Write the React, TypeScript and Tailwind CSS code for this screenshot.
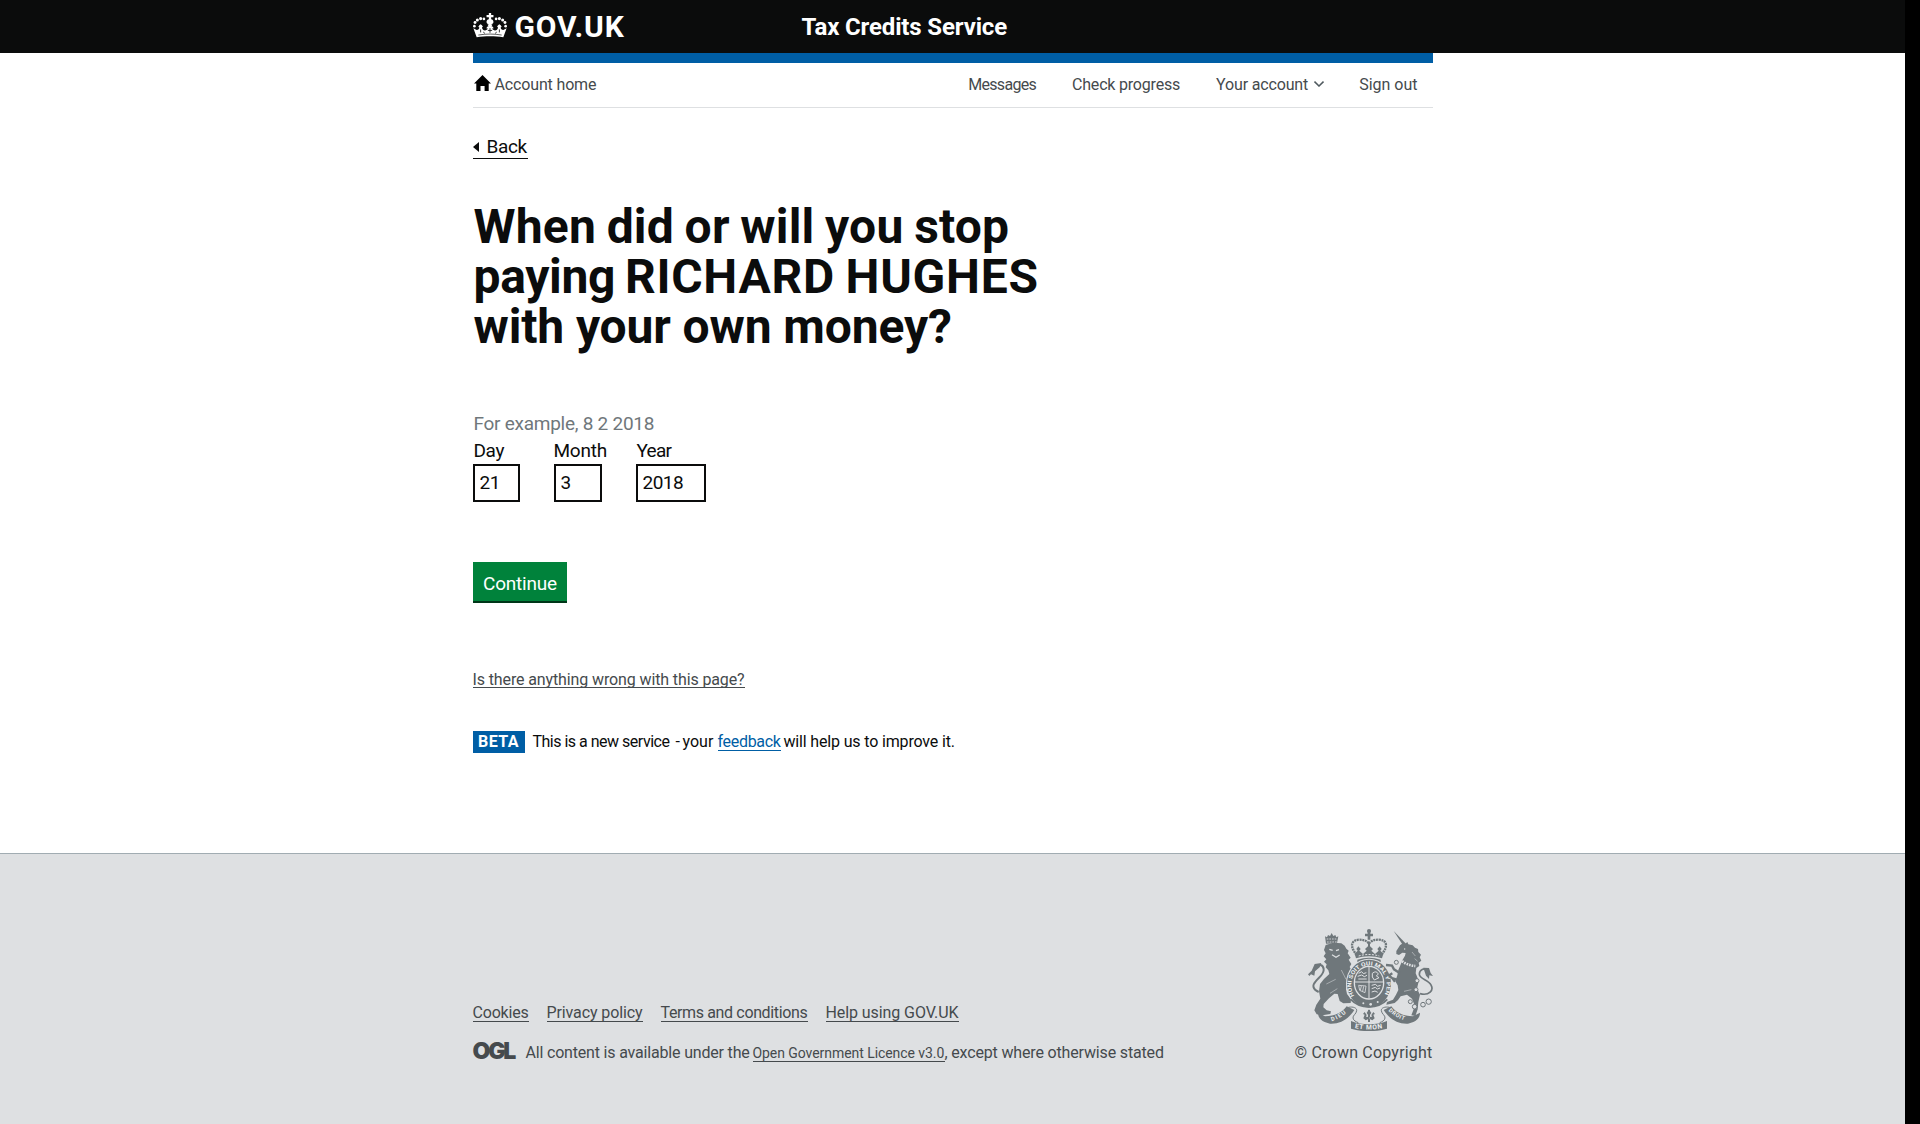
import type { ReactNode } from "react";

function CrownLogo() {
  const pearls: [number, number, number][] = [
    [29, 64, 4], [31, 53, 4.4], [38, 45, 4.6], [48, 41, 4.8], [58, 42, 4],
    [124, 64, 4], [122, 53, 4.4], [115, 45, 4.6], [105, 41, 4.8], [95, 42, 4],
  ];
  return (
    <svg viewBox="25 24 103 76" className="mb-[2px] h-[25px] w-[34px]" fill="#fff" aria-hidden="true">
      {pearls.map(([x, y, r]) => (
        <circle key={`${x}-${y}`} cx={x} cy={y} r={r} />
      ))}
      <path d="M73 24h7v6h7v7h-7v6c5 1 7 4 7 8s-4 7-10.500 7S66 55 66 51s2-7 7-8v-6h-7v-7h7z" />
      <path d="M26 70L36 76C41 75 44 72 44 68L41 66L44 61L48 58L52 61L55 66L52 68C53 74 57 77 61 77S69 74 70 71L65 70L69 65L72 64L69 60L76.500 57L84 60L81 64L84 65L88 70L83 71C84 74 88 77 92 77S100 74 101 68L98 66L101 61L105 58L109 61L112 66L109 68C109 72 112 75 117 76L127 70L117 98C92 94 61 94 36 98Z" />
      <path d="M48 74v9M56 82l5 4M76.500 70v14M70 77h13M105 74v9M97 82l-5 4" stroke="#0b0c0c" strokeWidth="2.500" fill="none" />
      <path d="M41 91c23-4 49-4 71 0" stroke="#0b0c0c" strokeWidth="2" fill="none" />
    </svg>
  );
}

function RoyalArms() {
  return (
    <svg viewBox="84 57 375 306" className="h-[102px] w-[125px]" fill="#6f777b" aria-label="Royal coat of arms">
      <defs>
        <path id="garter" d="M223 258 A53 59 0 1 1 311 258" />
        <path id="dieu" d="M155 334 Q184 325 205 303" />
        <path id="etmon" d="M224 354 Q267 363 311 354" />
        <path id="droit" d="M325 302 Q346 324 382 334" />
      </defs>

      {/* lion */}
      <path d="M116 246c-18-8-20-20-9-32 12-14 26-22 24-37-2-14-15-16-25-6" stroke="#6f777b" strokeWidth="6" fill="none" />
      <path d="M84 193L95 182L104 162L124 159L119 172L105 184L103 197L93 193L88 198Z" />
      <path d="M135 79L141 82L144 75L150 78L155 69L160 78L166 75L169 82L175 79L171 100L138 101Z" />
      <path d="M140 87h31M141 96h30" stroke="#dee0e2" strokeWidth="2.500" strokeDasharray="5 3" />
      <path d="M137 105L160 98L184 100L194 107L199 116L206 122L203 130L212 143L206 149L214 162L209 171L217 185L221 202L216 216L201 214L198 238L201 252L213 268L212 279L190 280L179 273L173 252L163 251L147 265L131 282L130 292L140 301L153 304L151 312L127 316L110 313L103 301L109 284L121 266L117 244L120 222L132 207L148 192L145 181L137 172L140 163L132 155L139 148L131 139L137 130L132 120Z" />
      <path d="M148 118l10 3M168 122l9-3M156 134l12 8 11-7" stroke="#dee0e2" strokeWidth="3.500" fill="none" />
      <path d="M139 222l28-14M150 250l22-14M184 180l14 28" stroke="#dee0e2" strokeWidth="1.500" fill="none" />

      {/* crown */}
      <circle cx="267" cy="63" r="6" />
      <path d="M263 62h8v9h8v8h-8v10h-8V79h-8v-8h8z" />
      <path d="M230 135C208 108 213 90 238 89C250 89 261 92 267 101C273 92 284 89 296 89C321 90 326 108 304 135" stroke="#6f777b" strokeWidth="7" strokeDasharray="6 2" fill="none" />
      <path d="M264 98h6v30h-6z" />
      <path d="M224 131L233 122L229 117L235 109L242 117L238 122L249 132L260 122L255 117L267 106L279 117L274 122L285 132L296 122L292 117L299 109L305 117L301 122L310 131L306 145C282 137 252 137 228 145Z" />
      <path d="M232 149c22-8 48-8 70 0v9c-22-8-48-8-70 0z" />
      <path d="M236 138c20-6 42-6 62 0" stroke="#dee0e2" strokeWidth="3" strokeDasharray="6 4" fill="none" />

      {/* garter and shield */}
      <ellipse cx="267" cy="221" rx="69" ry="75" fill="#dee0e2" />
      <ellipse cx="267" cy="221" rx="66" ry="72" />
      <ellipse cx="267" cy="218" rx="46" ry="51" fill="#dee0e2" />
      <ellipse cx="267" cy="218" rx="42" ry="47" />
      <path d="M267 171v94M225 216h84" stroke="#dee0e2" strokeWidth="3" />
      <path d="M236 190l9-5 5 6 9-3M233 199l12-4 8 5 8-4M235 207h25M277 190q12-10 18 2l-6 6 8 5-14 7-6-9zM275 226l12-3 5 6 10-3M275 236l11-4 6 5 8-3M275 246l10-3 8 4" stroke="#dee0e2" strokeWidth="3" fill="none" />
      <path d="M236 226l22 2-3 20-16-7zM244 228l-3 13M251 229l-3 15" stroke="#dee0e2" strokeWidth="2.500" fill="none" />
      <path d="M212 268C240 298 294 298 322 268" stroke="#6f777b" strokeWidth="5" fill="none" />
      <circle cx="250" cy="280" r="3" fill="#dee0e2" />
      <circle cx="272" cy="283" r="4" fill="#dee0e2" />
      <circle cx="293" cy="276" r="3" fill="#dee0e2" />
      <text fill="#eef0f1" fontFamily="Roboto" fontWeight="700" fontSize="17">
        <textPath href="#garter" textLength="262" lengthAdjust="spacingAndGlyphs">HONI SOIT QUI MAL Y PENSE</textPath>
      </text>

      {/* unicorn */}
      <path d="M341 63L378 101L370 107Z" />
      <path d="M349 123L360 106L368 100L374 103L382 96L385 103L398 106L405 113L414 117L415 126L423 134L419 142L424 152L416 158L418 168L409 174L407 190L412 202L415 218L411 236L420 254L415 276L413 298L406 318L394 316L401 298L402 281L396 266L381 254L362 259L354 270L344 279L319 284L321 276L339 269L348 254L355 240L353 226L346 214L352 196L355 180L361 166L367 151L375 137L377 129L367 128L357 135L349 132Z" />
      <path d="M360 190L342 178L336 167L318 165M356 210L336 204L327 196L337 190M337 205L345 215" stroke="#6f777b" strokeWidth="7" fill="none" />
      <path d="M360 148C372 160 388 167 406 168" stroke="#dee0e2" strokeWidth="8" strokeDasharray="5 3" fill="none" />
      <circle cx="374" cy="117" r="2" fill="#dee0e2" />
      <path d="M396 126l10 12M404 146l9 8M372 244l22-5" stroke="#dee0e2" strokeWidth="1.500" fill="none" />
      <path d="M420 251C448 258 462 240 453 225C446 210 418 207 418 193C418 179 432 172 444 181" stroke="#6f777b" strokeWidth="5" fill="none" />
      <path d="M430 173L447 174L452 189L459 198L448 196L447 207L438 197L434 185Z" />
      <g fill="none" stroke="#6f777b" strokeWidth="3">
        <circle cx="349" cy="157" r="6" />
        <circle cx="411" cy="212" r="6" fill="#dee0e2" />
        <circle cx="408" cy="239" r="6" fill="#dee0e2" />
        <circle cx="391" cy="275" r="6" fill="#dee0e2" />
        <circle cx="404" cy="290" r="7" fill="#dee0e2" />
        <circle cx="429" cy="284" r="7" />
        <circle cx="446" cy="275" r="8" />
      </g>

      {/* motto ribbon */}
      <path d="M114 308L135 319C165 319 186 308 200 289L223 300C207 326 180 343 150 341L134 336C122 331 114 321 114 308Z" />
      <path d="M420 308L399 319C369 319 348 308 334 289L311 300C327 326 354 343 384 341L400 336C412 331 420 321 420 308Z" />
      <path d="M205 292C220 289 231 294 230 302C229 312 218 316 219 324C220 332 228 335 235 338M329 292C314 289 303 294 304 302C305 312 316 316 315 324C314 332 306 335 299 338" stroke="#6f777b" strokeWidth="3" fill="none" />
      <path d="M213 333C245 346 289 346 321 333V356C289 366 245 366 213 356Z" />
      <path d="M264 300h6v36h-6zM267 298L274 309L267 319L260 309ZM265 327L257 331L250 325L254 314L249 312L254 306L260 315L258 320L265 321ZM269 327L277 331L284 325L280 314L285 312L280 306L274 315L276 320L269 321Z" />
      <g fill="#eef0f1" fontFamily="Roboto" fontWeight="700" fontSize="17">
        <text><textPath href="#dieu" textLength="50">DIEU</textPath></text>
        <text fontSize="20"><textPath href="#etmon" textLength="84">ET MON</textPath></text>
        <text><textPath href="#droit" textLength="56">DROIT</textPath></text>
      </g>
    </svg>
  );
}

function DateField({ label, value, labelClass, boxClass }: { label: string; value: string; labelClass: string; boxClass: string }) {
  return (
    <label className="block text-[19px] leading-[25px] text-[#0b0c0c]">
      <span className={`block ${labelClass}`}>{label}</span>
      <input
        type="text"
        defaultValue={value}
        className={`mt-px block h-[38px] border-2 border-[#0b0c0c] bg-white pr-0 pb-px pl-[5px] tracking-[-0.55px] outline-none ${boxClass}`}
      />
    </label>
  );
}

function FooterLink({ children, className }: { children: ReactNode; className: string }) {
  return (
    <a href="#" className={`border-b border-[#454a4d] leading-[17px] ${className}`}>
      {children}
    </a>
  );
}

export default function App() {
  return (
    <div className="flex h-[1124px] w-[1920px] overflow-hidden bg-black font-['Roboto',sans-serif]">
      <div className="flex w-[1905px] flex-col bg-white text-[#0b0c0c]">
        <header className="h-[53px] bg-[#0b0c0c] text-white">
          <div className="mx-auto flex h-full w-[960px] items-center">
            <CrownLogo />
            <span className="ml-2 w-[287px] text-[30px] font-bold tracking-[0.9px]">GOV.UK</span>
            <span className="text-[24px] font-bold tracking-[-0.15px]">Tax Credits Service</span>
          </div>
        </header>

        <main className="mx-auto h-[800px] w-[960px]">
          <div className="h-[10px] bg-[#005ea5]" />
          <nav className="flex h-[45px] items-center border-b border-[#dee0e2] text-[16px] text-[#454a4d]">
            <svg viewBox="0 0 17 16" className="mb-[5px] ml-px h-4 w-[17px]" fill="#000" aria-hidden="true">
              <path d="M8.500 0L17 8.600h-2.300V16h-4.100v-5H6.500v5H2.300V8.600H0z" />
            </svg>
            <a href="#" className="ml-1 tracking-[-0.15px]">Account home</a>
            <a href="#" className="ml-auto tracking-[-0.7px]">Messages</a>
            <a href="#" className="ml-[36px] tracking-[-0.2px]">Check progress</a>
            <a href="#" className="ml-[36px] flex items-center tracking-[-0.15px]">
              Your account
              <svg viewBox="0 0 10 6" className="mb-[3px] ml-[6px] h-[6px] w-[10px]" fill="none" stroke="#505a5f" strokeWidth="1.500" aria-hidden="true">
                <path d="M0.500 0.600L5 5l4.500-4.400" />
              </svg>
            </a>
            <a href="#" className="mr-[15px] ml-[35px]">Sign out</a>
          </nav>

          <a href="#" className="mt-7 flex h-[23px] w-[55px] items-center border-b border-[#0b0c0c] text-[19px]">
            <svg viewBox="0 0 6 10" className="mb-px h-[10px] w-[6px] shrink-0" fill="#0b0c0c" aria-hidden="true">
              <path d="M6 0v10L0 5z" />
            </svg>
            <span className="ml-2 tracking-[-0.35px]">Back</span>
          </a>

          <h1 className="mt-[43px] text-[48px] leading-[50px] font-bold">
            <span className="block pl-px tracking-[0.2px] [word-spacing:-1.5px]">When did or will you stop</span>
            <span className="block pl-px tracking-[0.75px] [word-spacing:-2px]">
              <span className="tracking-[-0.3px]">paying </span>RICHARD HUGHES
            </span>
            <span className="block pl-px tracking-[-0.12px]">with your own money?</span>
          </h1>

          <form onSubmit={(e) => e.preventDefault()}>
            <p className="mt-[59px] pl-px text-[19px] leading-[25px] tracking-[-0.26px] text-[#6f777b]">For example, 8 2 2018</p>
            <div className="mt-[2px] flex">
              <div className="w-[81px]">
                <DateField label="Day" value="21" labelClass="pl-px tracking-[-0.35px]" boxClass="w-[47px]" />
              </div>
              <div className="w-[82px]">
                <DateField label="Month" value="3" labelClass="tracking-[-0.25px]" boxClass="w-[48px]" />
              </div>
              <DateField label="Year" value="2018" labelClass="pl-px tracking-[-0.7px]" boxClass="w-[70px]" />
            </div>
            <button
              type="submit"
              className="mt-[60px] block h-[41px] w-[94px] border-b-2 border-[#003618] bg-[#00823b] pt-1 pl-px text-[19px] leading-[25px] tracking-[-0.2px] text-white"
            >
              Continue
            </button>
          </form>

          <a href="#" className="mt-[70px] block w-[272px] border-b border-[#454a4d] text-[16px] leading-[14px] tracking-[-0.12px] whitespace-nowrap text-[#454a4d]">
            Is there anything wrong with this page?
          </a>

          <div className="mt-[43px] flex h-[22px] items-center text-[16px] leading-[20px] whitespace-nowrap">
            <strong className="flex h-[22px] w-[52px] items-center justify-center bg-[#005ea5] pb-px font-bold tracking-[0.4px] text-white">BETA</strong>
            <span className="ml-2 w-[143px] tracking-[-0.5px]">This is a new service</span>
            <span className="w-[7px]">-</span>
            <span className="w-[35px] tracking-[0px]">your</span>
            <a href="#" className="h-[18px] w-[63px] border-b border-[#005ea5] leading-[18px] tracking-[-0.31px] text-[#005ea5]">feedback</a>
            <span className="ml-[3px] tracking-[-0.16px]">will help us to improve it.</span>
          </div>
        </main>

        <footer className="flex-1 border-t border-[#a1acb2] bg-[#dee0e2] text-[16px] whitespace-nowrap text-[#454a4d]">
          <div className="mx-auto flex w-[960px] items-start justify-between pt-[75px]">
            <div className="pt-[75px]">
              <div className="flex gap-[18px]">
                <FooterLink className="w-[56px] tracking-[-0.2px]">Cookies</FooterLink>
                <FooterLink className="w-[96px] tracking-[-0.11px]">Privacy policy</FooterLink>
                <FooterLink className="w-[147px] tracking-[-0.36px]">Terms and conditions</FooterLink>
                <FooterLink className="w-[133px] tracking-[-0.08px]">Help using GOV.UK</FooterLink>
              </div>
              <div className="mt-[21px] flex h-5 items-center">
                <span className="mb-1 block w-[53px] font-['Inter',sans-serif] text-[23px] leading-5 font-black tracking-[-2.2px]">OGL</span>
                <span className="w-[227px] tracking-[-0.18px]">All content is available under the</span>
                <a href="#" className="h-[18px] w-[192px] border-b border-[#454a4d] text-[14px] leading-[19px] tracking-[-0.06px]">
                  Open Government Licence v3.0
                </a>
                <span className="tracking-[-0.16px]">, except where otherwise stated</span>
              </div>
            </div>
            <div className="flex flex-col items-end">
              <RoyalArms />
              <span className="mt-3 leading-5 tracking-[0.2px]">© Crown Copyright</span>
            </div>
          </div>
        </footer>
      </div>
    </div>
  );
}
